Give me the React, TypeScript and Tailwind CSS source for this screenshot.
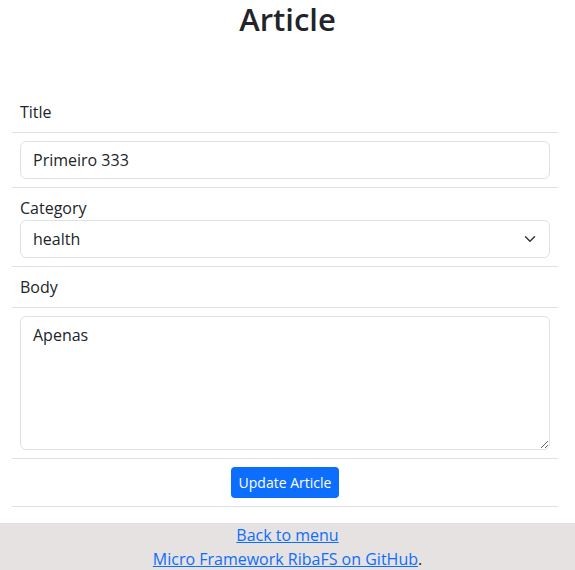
import React from "react";

export default function App() {
  const font = { fontFamily: '"Open Sans", "Noto Sans", sans-serif' };
  return (
    <div className="min-h-[570px] bg-white text-[#212529] text-[16px] leading-[24px]" style={font}>
      <h1 className="m-0 pt-[1px] text-center text-[31px] leading-[36px] font-semibold">Article</h1>
      <div className="ml-[12px] w-[546px] mt-[55px] mb-[16px]">
        <div className="border-b border-[#dee2e6] p-2">Title</div>
        <div className="border-b border-[#dee2e6] p-2">
          <input
            defaultValue="Primeiro 333"
            className="block h-[38px] w-full rounded-[6px] border border-[#dee2e6] px-3 py-[6px] text-[16px] text-[#212529] outline-none"
            style={font}
          />
        </div>
        <div className="border-b border-[#dee2e6] p-2">
          <div>Category</div>
          <div className="relative">
            <select
              defaultValue="health"
              className="block h-[38px] w-full appearance-none rounded-[6px] border border-[#dee2e6] bg-white pl-3 pr-9 text-[16px] text-[#212529] outline-none"
              style={font}
            >
              <option value="health">health</option>
            </select>
            <svg
              className="pointer-events-none absolute right-[12px] top-[13px]"
              width="16"
              height="12"
              viewBox="0 0 16 16"
            >
              <path d="m2 5 6 6 6-6" fill="none" stroke="#343a40" strokeWidth="2" strokeLinecap="round" strokeLinejoin="round" />
            </svg>
          </div>
        </div>
        <div className="border-b border-[#dee2e6] p-2">Body</div>
        <div className="border-b border-[#dee2e6] p-2">
          <textarea
            defaultValue="Apenas"
            className="block h-[134px] w-full rounded-[6px] border border-[#dee2e6] px-3 py-[6px] text-[16px] text-[#212529] outline-none"
            style={font}
          />
        </div>
        <div className="flex justify-center border-b border-[#dee2e6] p-2">
          <button className="h-[31px] rounded-[4px] bg-[#0d6efd] px-[8px] text-[14px] leading-[21px] text-white">
            Update Article
          </button>
        </div>
      </div>
      <div className="bg-[#e6e2e2] text-center leading-[24px]">
        <div>
          <a href="#" className="text-[#0d6efd] underline">Back to menu</a>
        </div>
        <div>
          <a href="#" className="text-[#0d6efd] underline">Micro Framework RibaFS on GitHub</a>.
        </div>
      </div>
    </div>
  );
}
